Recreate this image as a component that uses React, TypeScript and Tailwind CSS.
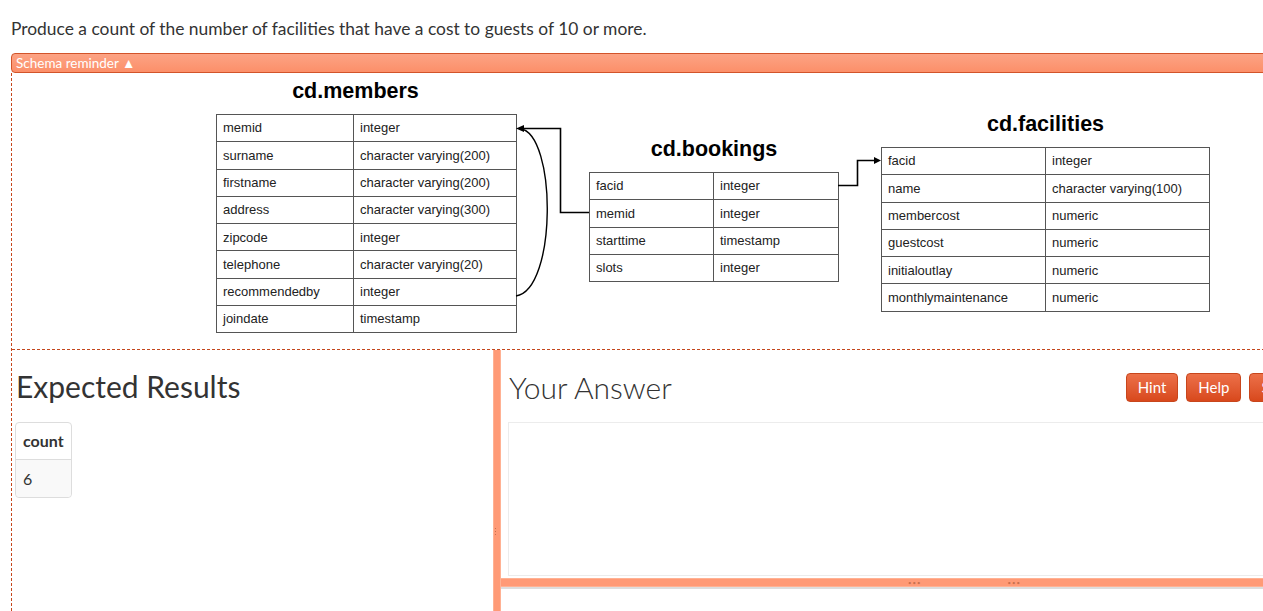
const members: [string, string][] = [
  ["memid", "integer"],
  ["surname", "character varying(200)"],
  ["firstname", "character varying(200)"],
  ["address", "character varying(300)"],
  ["zipcode", "integer"],
  ["telephone", "character varying(20)"],
  ["recommendedby", "integer"],
  ["joindate", "timestamp"],
]

const bookings: [string, string][] = [
  ["facid", "integer"],
  ["memid", "integer"],
  ["starttime", "timestamp"],
  ["slots", "integer"],
]

const facilities: [string, string][] = [
  ["facid", "integer"],
  ["name", "character varying(100)"],
  ["membercost", "numeric"],
  ["guestcost", "numeric"],
  ["initialoutlay", "numeric"],
  ["monthlymaintenance", "numeric"],
]

const SchemaTable = ({ title, rows, first, width, className, titleClass = "" }: { title: string; rows: [string, string][]; first: string; width: string; className: string; titleClass?: string }) => {
  return (
    <div className={className}>
      <div className={`h-[24px] text-center text-[21.5px] leading-[24px] font-bold text-black mb-[11px] ${titleClass}`}>{title}</div>
      <table className={`border-collapse table-fixed ${width} font-['Liberation_Sans',Arial,sans-serif] text-[13px] text-[#222]`}>
        <tbody>
          {rows.map(([name, type]) => (
            <tr key={name} className="h-[27.3px]">
              <td className={`${first} border border-[#555] px-[6px] py-0`}>{name}</td>
              <td className="border border-[#555] px-[6px] py-0">{type}</td>
            </tr>
          ))}
        </tbody>
      </table>
    </div>
  )
}

const OrangeButton = ({ label }: { label: string }) => {
  return (
    <button className="h-[29px] px-[11px] rounded-[4px] border border-[#c8461c] bg-gradient-to-b from-[#ec7048] to-[#d8481b] text-white text-[15px] leading-none">
      {label}
    </button>
  )
}

export default function App() {
  return (
    <div className="w-[1263px] h-[611px] overflow-hidden bg-white font-['Lato','Open_Sans',sans-serif] text-[#333]">
      <div className="w-[1500px] pl-[11px]">
        <p className="h-[53px] pt-[18px] text-[17.4px] leading-[22px]">
          Produce a count of the number of facilities that have a cost to guests of 10 or more.
        </p>

        <div className="h-[20px] rounded-l-[4px] border border-[#d2542a] bg-gradient-to-b from-[#fca384] to-[#fc8f69] pl-[4px] text-[13.5px] leading-[18px] text-white">
          Schema reminder ▲
        </div>

        <div className="border-l border-dashed border-[#c4461c]">
          {/* diagram */}
          <div className="relative h-[276px] flex items-start font-['Liberation_Sans',Arial,sans-serif]">
            <SchemaTable title="cd.members" rows={members} first="w-[137px]" width="w-[301px]" className="ml-[204px] mt-[6px]" titleClass="pr-[22px]" />
            <SchemaTable title="cd.bookings" rows={bookings} first="w-[124px]" width="w-[250px]" className="ml-[72px] mt-[64px]" />
            <SchemaTable title="cd.facilities" rows={facilities} first="w-[164px]" width="w-[329px]" className="ml-[42px] mt-[39px]" />
            <svg className="absolute left-0 top-0 pointer-events-none" width="1251" height="276" viewBox="12 73 1251 276" fill="none">
              <path d="M589 212.5 H560.5 V128.5 H522" stroke="#000" strokeWidth="1.6" />
              <polygon points="516,128.5 524,125 524,132" fill="#000" />
              <path d="M516 296 C557 290 557 134 520 128.5" stroke="#000" strokeWidth="1.4" />
              <path d="M838 185.5 H857.5 V160.5 H875" stroke="#000" strokeWidth="1.6" />
              <polygon points="881,160.5 874,157 874,164" fill="#000" />
            </svg>
          </div>

          {/* bottom split */}
          <div className="flex h-[262px] border-t border-dashed border-[#c4461c]">
            <div className="w-[481px] pl-[4px]">
              <h2 className="mt-[20px] text-[30px] leading-[33px] text-[#333]">Expected Results</h2>
              <table className="mt-[19px] -ml-[1px] border-separate border-spacing-0 rounded-[4px] border border-[#ddd] text-[16px]">
                <thead>
                  <tr>
                    <th className="h-[37px] px-[7px] text-left font-bold border-b border-[#ddd]">count</th>
                  </tr>
                </thead>
                <tbody>
                  <tr>
                    <td className="h-[37px] px-[7px] bg-[#f9f9f9] rounded-b-[4px]">6</td>
                  </tr>
                </tbody>
              </table>
            </div>

            <div className="relative w-[8px] bg-[#ff9a76] border-x border-[#ffb193]">
              <div className="absolute left-[1px] top-[178px] flex flex-col gap-[2px]">
                <span className="w-[1px] h-[1px] bg-[#c8714f]"></span>
                <span className="w-[1px] h-[1px] bg-[#c8714f]"></span>
                <span className="w-[1px] h-[1px] bg-[#c8714f]"></span>
              </div>
            </div>

            <div className="w-[869px] flex flex-col">
              <div className="flex items-center justify-between pl-[8px] pr-[8px] mt-[21px]">
                <h2 className="text-[30px] leading-[33px] font-light text-[#333]">Your Answer</h2>
                <div className="flex gap-[8px]">
                  <OrangeButton label="Hint" />
                  <OrangeButton label="Help" />
                  <OrangeButton label="Save" />
                  <OrangeButton label="Run" />
                </div>
              </div>
              <div className="ml-[7px] mt-[18px] h-[154px] border border-[#ececec] bg-white"></div>
              <div className="mt-[2px] h-[9px] bg-[#ff9a76] border-y border-[#ffb193] flex items-center gap-[86px] pl-[407px]">
                <span className="text-[6px] leading-none tracking-[1px] text-[#c8714f]">•••</span>
                <span className="text-[6px] leading-none tracking-[1px] text-[#c8714f]">•••</span>
              </div>
              <div className="h-[2px] bg-[#ddd]"></div>
            </div>
          </div>
        </div>
      </div>
    </div>
  )
}
